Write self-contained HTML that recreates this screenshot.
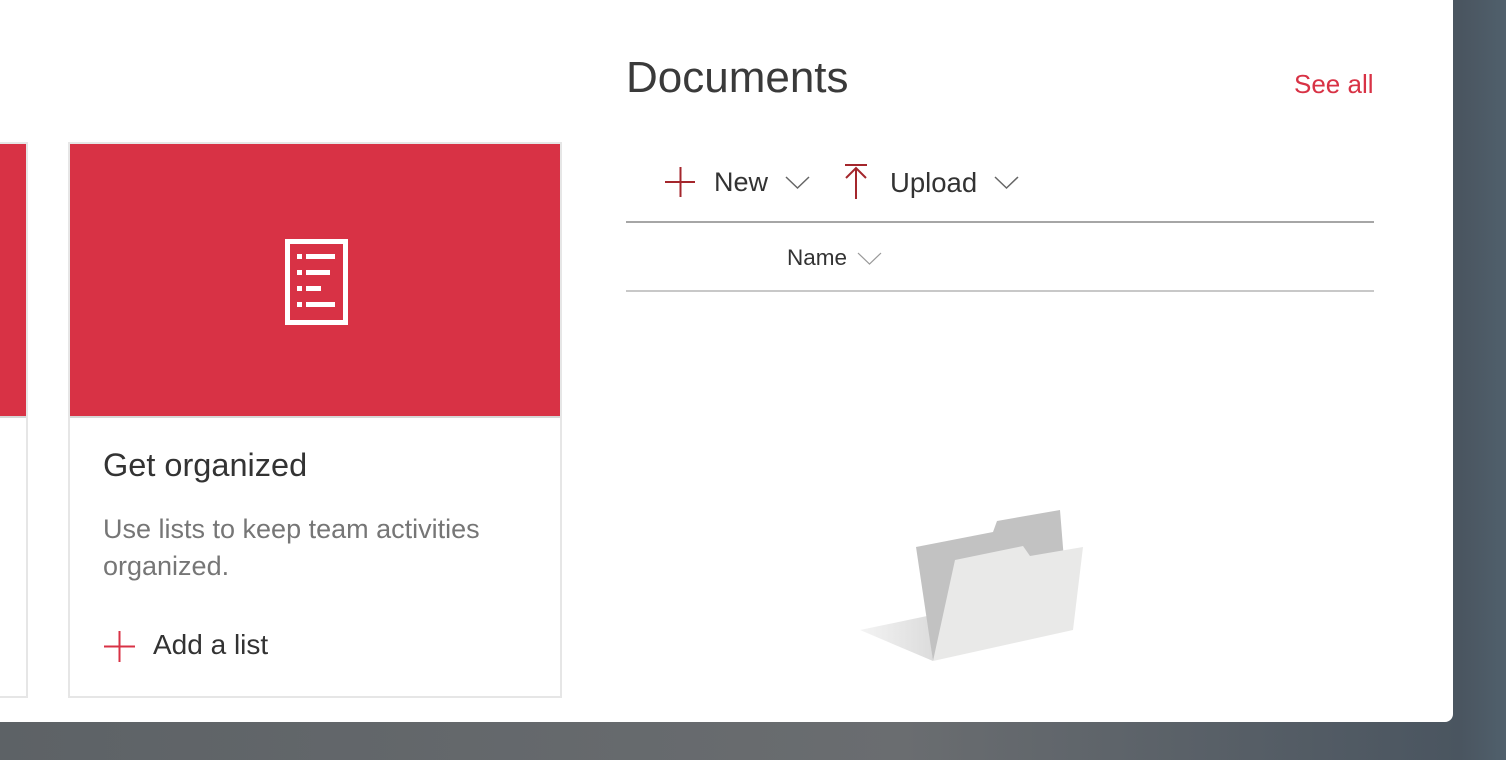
<!DOCTYPE html>
<html><head><style>
body{margin:0;width:1506px;height:760px;overflow:hidden;background:linear-gradient(90deg,#5d6266 0%,#6a6d70 60%,#4a5560 97%,#50606c 100%);font-family:"Liberation Sans",sans-serif;position:relative}
.panel{position:absolute;left:0;top:0;width:1453px;height:722px;background:#fff;border-bottom-right-radius:8px}
.card{position:absolute;border:2px solid #e6e6e6;background:#fff;box-sizing:border-box}
.red{position:absolute;background:#d83245;border-bottom:2px solid #d6d6d6}
.t{position:absolute;white-space:nowrap}
</style></head><body>
<div class="panel">
<div class="card" style="left:-10px;top:142px;width:38px;height:556px"></div>
<div class="red" style="left:0;top:144px;width:26px;height:272px"></div>
<div class="card" style="left:68px;top:142px;width:494px;height:556px"></div>
<div class="red" style="left:70px;top:144px;width:490px;height:272px"></div>
<svg style="position:absolute;left:285px;top:239px" width="64" height="86">
<rect x="2.5" y="2.5" width="58" height="81" fill="none" stroke="#fff" stroke-width="5"/>
<g fill="#fff"><rect x="12" y="15" width="5" height="5"/><rect x="21" y="15" width="29" height="5"/>
<rect x="12" y="31" width="5" height="5"/><rect x="21" y="31" width="24" height="5"/>
<rect x="12" y="47" width="5" height="5"/><rect x="21" y="47" width="15" height="5"/>
<rect x="12" y="63" width="5" height="5"/><rect x="21" y="63" width="29" height="5"/></g></svg>
<div class="t" style="left:103px;top:447px;font-size:32.5px;color:#333">Get organized</div>
<div class="t" style="left:103px;top:511px;font-size:27px;line-height:37px;color:#767676;white-space:normal;width:440px">Use lists to keep team activities organized.</div>
<svg style="position:absolute;left:104px;top:631px" width="32" height="32"><path d="M15.5 0V31M0 15.5H31" stroke="#d83245" stroke-width="2"/></svg>
<div class="t" style="left:153px;top:629px;font-size:28px;color:#333">Add a list</div>

<div class="t" style="left:626px;top:53px;font-size:44px;color:#3a3a3a">Documents</div>
<div class="t" style="left:1294px;top:69px;font-size:26px;color:#d83245">See all</div>
<svg style="position:absolute;left:665px;top:167px" width="32" height="32"><path d="M15.5 0V30M0 15H30" stroke="#a4262c" stroke-width="2"/></svg>
<div class="t" style="left:714px;top:167px;font-size:27px;color:#333">New</div>
<svg style="position:absolute;left:785px;top:175px" width="26" height="16"><path d="M1 2L12.5 13L24 2" fill="none" stroke="#666" stroke-width="1.5"/></svg>
<svg style="position:absolute;left:844px;top:164px" width="24" height="36"><path d="M1 1H23M12 35V4M2 14L12 4L22 14" fill="none" stroke="#a4262c" stroke-width="2"/></svg>
<div class="t" style="left:890px;top:167px;font-size:27.5px;color:#333">Upload</div>
<svg style="position:absolute;left:994px;top:175px" width="26" height="16"><path d="M1 2L12.5 13L24 2" fill="none" stroke="#666" stroke-width="1.5"/></svg>
<div style="position:absolute;left:626px;top:221px;width:748px;height:2px;background:#a6a6a6"></div>
<div class="t" style="left:787px;top:245px;font-size:22.5px;color:#333">Name</div>
<svg style="position:absolute;left:857px;top:251px" width="26" height="16"><path d="M1 2L12.5 13L24 2" fill="none" stroke="#999" stroke-width="1.2"/></svg>
<div style="position:absolute;left:626px;top:290px;width:748px;height:2px;background:#c8c8c8"></div>

<svg style="position:absolute;left:0;top:0" width="1453" height="722">
<defs><linearGradient id="sh" x1="0" x2="1"><stop offset="0" stop-color="#f4f4f4"/><stop offset="1" stop-color="#dcdcdc"/></linearGradient></defs>
<polygon points="860,630 927,616 933,661" fill="url(#sh)"/>
<polygon points="916,547 993,532 997,521 1060,510 1064,560 960,600 933,661" fill="#c2c2c2"/>
<polygon points="955,560 1023,546 1030,556 1083,547 1073,630 933,661" fill="#e9e9e8"/>
</svg>
</div>
</body></html>
